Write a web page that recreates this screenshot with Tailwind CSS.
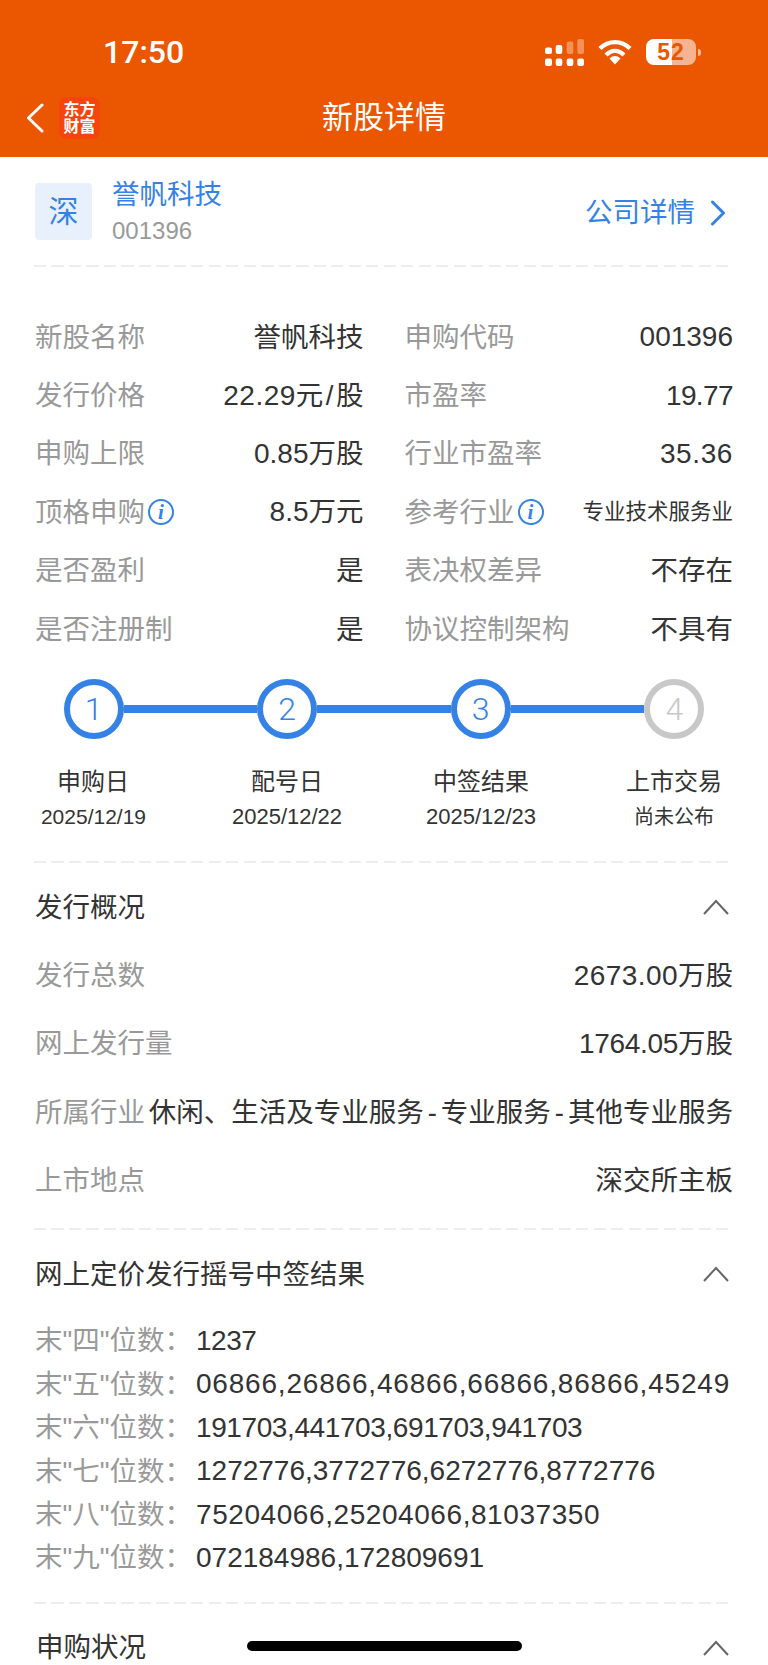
<!DOCTYPE html>
<html lang="en">
<head>
    <meta charset="UTF-8">
    <meta name="viewport" content="width=device-width, initial-scale=1.0">
    <script src="https://cdn.jsdelivr.net/npm/@tailwindcss/browser@4"></script>
    <title>新股详情</title>
</head>
<body class="bg-white font-['Liberation_Sans','Noto_Sans_CJK_SC',sans-serif]">
<div class="relative w-[768px] h-[1665px] overflow-hidden bg-white">
    <!-- header -->
    <div class="h-[157px] bg-[#eb5600] text-white">
        <div class="h-[88px] pt-[16px] flex">
            <div class="h-[72px] flex items-center pl-[103px] w-[545px] font-['Roboto',sans-serif] font-medium text-[32px] leading-none">17:50</div>
            <div class="h-[72px] flex items-center">
                <svg width="39" height="27" viewBox="0 0 39 27" fill="#fff">
                    <rect x="0" y="8.5" width="7" height="6.5" rx="2"/>
                    <rect x="10.7" y="6" width="6.6" height="9" rx="2"/>
                    <rect x="21.7" y="2.5" width="6.6" height="12.5" rx="2" opacity=".35"/>
                    <rect x="32.3" y="0" width="6.7" height="15" rx="2" opacity=".35"/>
                    <rect x="0" y="19.5" width="7" height="7.5" rx="2"/>
                    <rect x="10.7" y="19.5" width="6.6" height="7.5" rx="2"/>
                    <rect x="21.7" y="19.5" width="6.6" height="7.5" rx="2"/>
                    <rect x="32.3" y="19.5" width="6.7" height="7.5" rx="2"/>
                </svg>
                <svg class="ml-[14px]" width="34" height="26" viewBox="0 0 34 26" fill="none" stroke="#fff" stroke-width="4.4">
                    <path d="M2 9.5 C10.5 1 23.5 1 32 9.5"/>
                    <path d="M8 16 C13.5 10.5 20.5 10.5 26 16"/>
                    <path d="M11.5 19.5 C15 16.2 19 16.2 22.5 19.5 L17 25.5 Z" fill="#fff" stroke="none"/>
                </svg>
                <div class="ml-[14px] w-[50px] h-[26px] rounded-[8px] bg-[linear-gradient(90deg,#fff_0,#fff_52%,#ffffff90_52%,#ffffff90_100%)] flex items-center justify-center text-[#eb5600] font-bold text-[23px] tracking-[1px] leading-none">52</div>
                <div class="ml-[2px] w-[3px] h-[7px] rounded-r-full bg-white/60"></div>
            </div>
        </div>
        <div class="relative h-[58px] pt-[3px] flex items-center justify-center text-[31px]">
            <svg class="absolute left-[26px] top-[15px]" width="18" height="30" viewBox="0 0 18 30" fill="none" stroke="#fff" stroke-width="3" stroke-linecap="round" stroke-linejoin="round"><path d="M16 2 L2.5 15 L16 28"/></svg>
            <div class="absolute left-[59px] top-[9px] w-[41px] h-[42px] rounded-[8px] bg-[#f5450c] flex flex-col items-center justify-center font-bold text-[16px] leading-[17px]"><span>东方</span><span>财富</span></div>
            新股详情
        </div>
    </div>

    <div class="pl-[35px] pr-[35px]">
        <!-- stock title -->
        <div class="mt-[26px] h-[57px] flex items-center">
            <div class="w-[57px] h-[57px] rounded-[4px] bg-[#e8f1fb] text-[#3582e6] text-[30px] flex items-center justify-center">深</div>
            <div class="ml-[20px] flex-1">
                <div class="text-[27.5px] leading-[36px] text-[#3582e6]">誉帆科技</div>
                <div class="mt-[3px] text-[24px] leading-[30px] text-[#999]">001396</div>
            </div>
            <div class="pt-[3px] text-[27.5px] text-[#3582e6] flex items-center">公司详情
                <svg class="ml-[15px] mr-[7px]" width="16" height="26" viewBox="0 0 16 26" fill="none" stroke="#3582e6" stroke-width="3" stroke-linecap="round" stroke-linejoin="round"><path d="M2.5 2 L13.5 13 L2.5 24"/></svg>
            </div>
        </div>
        <div class="mt-[25px] -ml-[1px] h-[2px] w-[695px] bg-[repeating-linear-gradient(90deg,#eee_0,#eee_12px,transparent_12px,transparent_17.5px)]"></div>

        <!-- basic info -->
        <div class="mt-[41px] grid grid-cols-2 gap-x-[41px] text-[27.5px] text-[#333] auto-rows-[58.4px]">
            <div class="flex items-center justify-between"><span class="text-[#999]">新股名称</span><span>誉帆科技</span></div>
            <div class="flex items-center justify-between"><span class="text-[#999]">申购代码</span><span class="text-[28px]">001396</span></div>
            <div class="flex items-center justify-between"><span class="text-[#999]">发行价格</span><span><span class="text-[28px] tracking-[.5px]">22.29</span>元<span class="px-[2.5px]">/</span>股</span></div>
            <div class="flex items-center justify-between"><span class="text-[#999]">市盈率</span><span class="text-[28px] tracking-[-.6px]">19.77</span></div>
            <div class="flex items-center justify-between"><span class="text-[#999]">申购上限</span><span><span class="text-[28px]">0.85</span>万股</span></div>
            <div class="flex items-center justify-between"><span class="text-[#999]">行业市盈率</span><span class="text-[28px] tracking-[.6px]">35.36</span></div>
            <div class="flex items-center justify-between">
                <span class="flex items-center text-[#999]">顶格申购<span class="ml-[3px] w-[26px] h-[26px] rounded-full border-2 border-[#3582e6] text-[#3582e6] flex items-center justify-center font-['Liberation_Serif',serif] italic font-bold text-[21px] leading-none">i</span></span>
                <span><span class="text-[28px]">8.5</span>万元</span>
            </div>
            <div class="flex items-center justify-between">
                <span class="flex items-center text-[#999]">参考行业<span class="ml-[3px] w-[26px] h-[26px] rounded-full border-2 border-[#3582e6] text-[#3582e6] flex items-center justify-center font-['Liberation_Serif',serif] italic font-bold text-[21px] leading-none">i</span></span>
                <span class="text-[21.5px]">专业技术服务业</span>
            </div>
            <div class="flex items-center justify-between"><span class="text-[#999]">是否盈利</span><span>是</span></div>
            <div class="flex items-center justify-between"><span class="text-[#999]">表决权差异</span><span>不存在</span></div>
            <div class="flex items-center justify-between"><span class="text-[#999]">是否注册制</span><span>是</span></div>
            <div class="flex items-center justify-between"><span class="text-[#999]">协议控制架构</span><span>不具有</span></div>
        </div>

        <!-- steps -->
        <div class="mt-[21px] ml-[28.5px] flex items-center h-[60px] font-['Roboto',sans-serif] font-light">
            <div class="w-[60px] h-[60px] shrink-0 rounded-full border-[6px] border-[#3582e6] text-[#3582e6] text-[32px] flex items-center justify-center">1</div>
            <div class="w-[133.6px] h-[8px] shrink-0 bg-[#3582e6]"></div>
            <div class="w-[60px] h-[60px] shrink-0 rounded-full border-[6px] border-[#3582e6] text-[#3582e6] text-[32px] flex items-center justify-center">2</div>
            <div class="w-[133.6px] h-[8px] shrink-0 bg-[#3582e6]"></div>
            <div class="w-[60px] h-[60px] shrink-0 rounded-full border-[6px] border-[#3582e6] text-[#3582e6] text-[32px] flex items-center justify-center">3</div>
            <div class="w-[133.6px] h-[8px] shrink-0 bg-[#3582e6]"></div>
            <div class="w-[60px] h-[60px] shrink-0 rounded-full border-[6px] border-[#c8c8c8] text-[#c8c8c8] text-[32px] flex items-center justify-center">4</div>
        </div>
        <div class="mt-[25px] -ml-[2px] grid grid-cols-[repeat(4,120px)] gap-x-[74px] text-center text-[#333]">
            <div><div class="text-[24px] leading-[36px]">申购日</div><div class="mt-[2px] pl-[1px] text-[21px] leading-[30px]">2025/12/19</div></div>
            <div><div class="text-[24px] leading-[36px]">配号日</div><div class="mt-[2px] text-[22px] leading-[30px]">2025/12/22</div></div>
            <div><div class="text-[24px] leading-[36px]">中签结果</div><div class="mt-[2px] text-[22px] leading-[30px]">2025/12/23</div></div>
            <div class="-ml-[2px]"><div class="text-[24px] leading-[36px]">上市交易</div><div class="mt-[2px] text-[20px] leading-[30px]">尚未公布</div></div>
        </div>
        <div class="mt-[29px] -ml-[1px] h-[2px] w-[695px] bg-[repeating-linear-gradient(90deg,#eee_0,#eee_12px,transparent_12px,transparent_17.5px)]"></div>

        <!-- offering overview -->
        <div class="mt-[24px] h-[40px] flex items-center justify-between text-[27.5px] text-[#333]">发行概况
            <svg class="mr-[4px]" width="26" height="16" viewBox="0 0 26 16" fill="none" stroke="#666" stroke-width="2"><path d="M1 15 L13 2 L25 15"/></svg>
        </div>
        <div class="mt-[14px] text-[27.5px] text-[#333] auto-rows-[68.5px] grid">
            <div class="flex items-center justify-between"><span class="text-[#999]">发行总数</span><span><span class="text-[28px] tracking-[.45px]">2673.00</span>万股</span></div>
            <div class="flex items-center justify-between"><span class="text-[#999]">网上发行量</span><span><span class="text-[28px] tracking-[-.3px]">1764.05</span>万股</span></div>
            <div class="flex items-center justify-between"><span class="text-[#999]">所属行业</span><span>休闲、生活及专业服务<span class="px-[4px]">-</span>专业服务<span class="px-[4px]">-</span>其他专业服务</span></div>
            <div class="flex items-center justify-between"><span class="text-[#999]">上市地点</span><span>深交所主板</span></div>
        </div>
        <div class="mt-[13px] -ml-[1px] h-[2px] w-[695px] bg-[repeating-linear-gradient(90deg,#eee_0,#eee_12px,transparent_12px,transparent_17.5px)]"></div>

        <!-- lottery results -->
        <div class="mt-[24px] h-[40px] flex items-center justify-between text-[27.5px] text-[#333]">网上定价发行摇号中签结果
            <svg class="mr-[4px]" width="26" height="16" viewBox="0 0 26 16" fill="none" stroke="#666" stroke-width="2"><path d="M1 15 L13 2 L25 15"/></svg>
        </div>
        <div class="mt-[25px] text-[28px] text-[#333] auto-rows-[43.4px] grid">
            <div class="flex items-center"><span class="w-[161px] text-[27.5px] text-[#999]">末"四"位数：</span><span class="tracking-[-.5px]">1237</span></div>
            <div class="flex items-center"><span class="w-[161px] text-[27.5px] text-[#999]">末"五"位数：</span><span class="tracking-[.8px]">06866,26866,46866,66866,86866,45249</span></div>
            <div class="flex items-center"><span class="w-[161px] text-[27.5px] text-[#999]">末"六"位数：</span><span class="tracking-[-.4px]">191703,441703,691703,941703</span></div>
            <div class="flex items-center"><span class="w-[161px] text-[27.5px] text-[#999]">末"七"位数：</span><span>1272776,3772776,6272776,8772776</span></div>
            <div class="flex items-center"><span class="w-[161px] text-[27.5px] text-[#999]">末"八"位数：</span><span class="tracking-[.57px]">75204066,25204066,81037350</span></div>
            <div class="flex items-center"><span class="w-[161px] text-[27.5px] text-[#999]">末"九"位数：</span><span>072184986,172809691</span></div>
        </div>
        <div class="mt-[22px] -ml-[1px] h-[2px] w-[695px] bg-[repeating-linear-gradient(90deg,#eee_0,#eee_12px,transparent_12px,transparent_17.5px)]"></div>

        <!-- subscription status -->
        <div class="mt-[24px] h-[40px] flex items-center justify-between text-[27.5px] text-[#333]"><span class="pl-[1px]">申购状况</span>
            <svg class="mr-[4px]" width="26" height="16" viewBox="0 0 26 16" fill="none" stroke="#666" stroke-width="2"><path d="M1 15 L13 2 L25 15"/></svg>
        </div>
    </div>

    <!-- home indicator -->
    <div class="absolute left-[247px] top-[1641px] w-[275px] h-[10px] rounded-full bg-black"></div>
</div>
</body>
</html>
